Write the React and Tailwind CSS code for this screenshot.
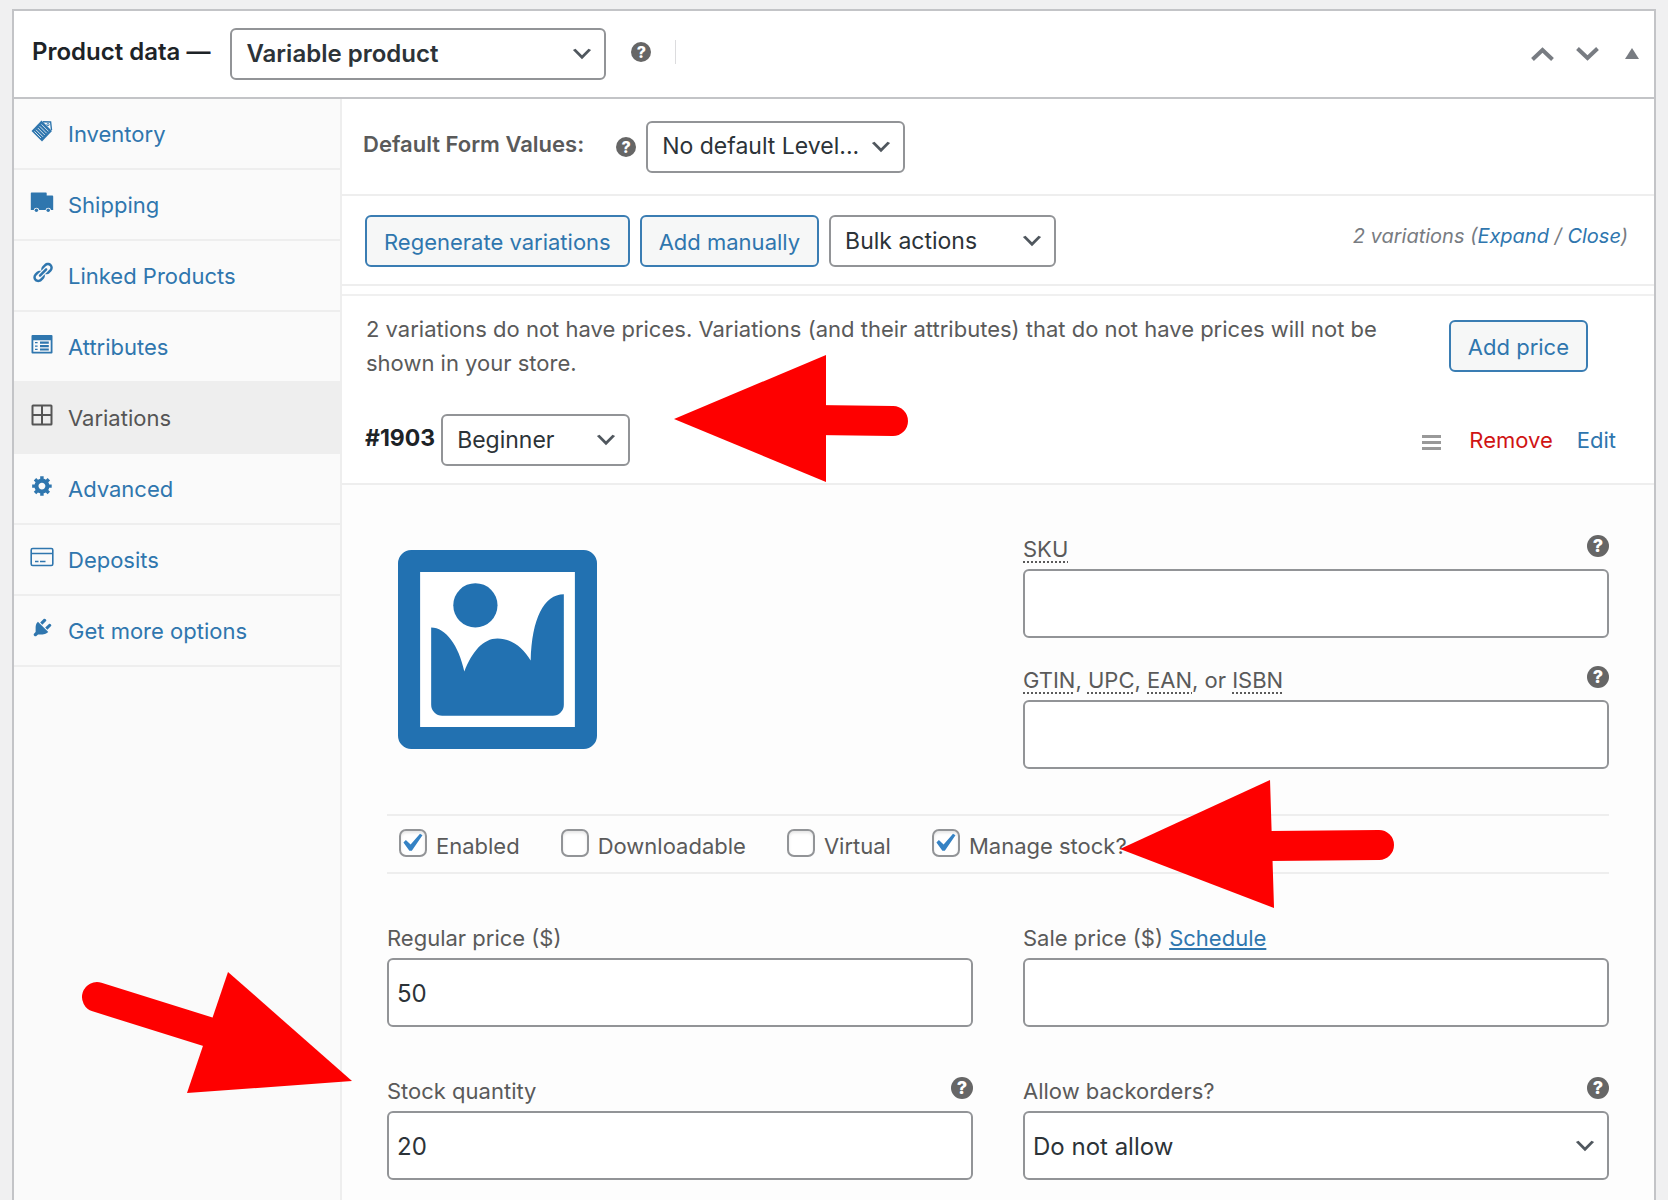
import React, { useState } from 'react';
import clsx from 'clsx';

const iconPaths = {
  link: 'M17.74 2.76c1.68 1.69 1.68 4.41 0 6.1l-1.53 1.52c-1.12 1.12-2.7 1.47-4.14 1.09l2.62-2.61.76-.77.76-.76c.84-.84.84-2.2 0-3.04-.84-.85-2.2-.85-3.04 0l-.77.76-3.38 3.38c-.37-1.44-.02-3.02 1.1-4.14l1.52-1.53c1.69-1.68 4.42-1.68 6.1 0zM8.59 13.43l5.34-5.34c.42-.42.42-1.1 0-1.52-.44-.43-1.13-.39-1.53 0l-5.33 5.34c-.42.42-.42 1.1 0 1.52.44.43 1.13.39 1.52 0zm-.76 2.29l4.14-4.15c.38 1.44.03 3.02-1.09 4.14l-1.52 1.53c-1.69 1.68-4.41 1.68-6.1 0-1.68-1.68-1.68-4.42 0-6.1l1.53-1.52c1.12-1.12 2.7-1.47 4.14-1.1l-4.14 4.15c-.85.84-.85 2.2 0 3.05.84.84 2.2.84 3.04 0z',
  gear: 'M18 12h-2.18c-.17.7-.44 1.35-.81 1.93l1.54 1.54-2.1 2.1-1.54-1.54c-.58.36-1.23.63-1.91.79V19H8v-2.18c-.68-.16-1.33-.43-1.91-.79l-1.54 1.54-2.12-2.12 1.54-1.54c-.36-.58-.63-1.23-.79-1.91H1V9.03h2.17c.16-.7.44-1.35.8-1.94L2.43 5.55l2.1-2.1 1.54 1.54c.58-.37 1.24-.64 1.93-.81V2h3v2.18c.68.16 1.33.43 1.91.79l1.54-1.54 2.12 2.12-1.54 1.54c.36.59.64 1.24.8 1.94H18V12zm-8.5 1.5c1.66 0 3-1.34 3-3s-1.34-3-3-3-3 1.34-3 3 1.34 3 3 3z',
  plug: 'M13.11 4.36L9.87 7.6 8 5.73l3.24-3.24c.35-.34 1.05-.2 1.56.32.52.51.66 1.21.31 1.55zm-8 1.77l.91-1.12 9.01 9.01-1.19.84c-.71.71-2.63 1.16-3.82 1.16H6.14L4.9 17.26c-.59.59-1.54.59-2.12 0-.59-.58-.59-1.53 0-2.12l1.24-1.24v-3.88c0-1.13.4-3.19 1.09-3.89zm7.26 3.97l3.24-3.24c.34-.35 1.04-.21 1.55.31.52.51.66 1.21.31 1.55l-3.24 3.25z',
};

const PathIcon = ({ d }) => (
  <svg viewBox="0 0 20 20" className="size-[23px] overflow-visible" fill="currentColor" aria-hidden="true">
    <path d={d} />
  </svg>
);

const NoteIcon = () => (
  <svg viewBox="0 0 24 24" className="size-6" fill="none" stroke="currentColor" aria-hidden="true">
    <path d="M11.5 1.5L22 12 12 22.5 1.5 12z" fill="currentColor" stroke="none" />
    <path d="M13 2.8l7.6.2.9 8" strokeWidth="1.4" />
    <circle cx="18" cy="5.6" r="1.1" strokeWidth="0.9" />
    <path d="M11.5 5.4l7 7M9.6 7.2l7 7M7.8 9l7 7M6 10.8l7 7M4.4 12.4l6.6 6.6" stroke="#fafafa" strokeWidth="0.8" />
  </svg>
);

const TruckIcon = () => (
  <svg viewBox="0 0 24 24" className="size-6" fill="currentColor" aria-hidden="true">
    <path d="M1.5 2.5h14.5a.7.7 0 0 1 .7.7V5.5h5.6a.9.9 0 0 1 .9.9V20h-2.2a2.8 2.8 0 0 0-5.5 0H9.2a2.8 2.8 0 0 0-5.5 0H.8V3.2a.7.7 0 0 1 .7-.7z" />
    <circle cx="6.4" cy="20.2" r="1.7" />
    <circle cx="18.2" cy="20.2" r="1.7" />
  </svg>
);

const ListIcon = () => (
  <svg viewBox="0 0 24 24" className="size-6" fill="currentColor" aria-hidden="true">
    <path fillRule="evenodd" d="M2.5 3h19a1 1 0 0 1 1 1v16.5a1 1 0 0 1-1 1h-19a1 1 0 0 1-1-1V4a1 1 0 0 1 1-1zM3.3 8.2v11.6h17.4V8.2z" />
    <path d="M10 9.6h8.8v2.2H10zM10 13h8.8v2.2H10zM10 16.4h8.8v2.2H10zM5 10h2.6v1.3H5zM5 13.4h2.6v1.3H5zM5 16.8h2.6v1.3H5z" />
  </svg>
);

const GridIcon = () => (
  <svg viewBox="0 0 24 24" className="size-6" fill="none" stroke="currentColor" strokeWidth="2" aria-hidden="true">
    <rect x="2.5" y="2.5" width="19" height="19" rx="0.5" />
    <path d="M12 2.5v19M2.5 12h19" />
  </svg>
);

const CardIcon = () => (
  <svg viewBox="0 0 24 24" className="size-6" fill="none" stroke="currentColor" strokeWidth="1.6" aria-hidden="true">
    <rect x="1.2" y="3.5" width="21.6" height="17" rx="1.5" />
    <path d="M1.2 8.5h21.6M5 16.5h3.5M10 16.5h5.5" />
  </svg>
);

const tabs = [
  { label: 'Inventory', icon: <NoteIcon /> },
  { label: 'Shipping', icon: <TruckIcon /> },
  { label: 'Linked Products', icon: <PathIcon d={iconPaths.link} /> },
  { label: 'Attributes', icon: <ListIcon /> },
  { label: 'Variations', icon: <GridIcon /> },
  { label: 'Advanced', icon: <PathIcon d={iconPaths.gear} /> },
  { label: 'Deposits', icon: <CardIcon /> },
  { label: 'Get more options', icon: <PathIcon d={iconPaths.plug} /> },
];

const HelpTip = ({ small }) => (
  <span
    className={clsx(
      'flex shrink-0 items-center justify-center rounded-full bg-[#666] font-extrabold text-white',
      small ? 'size-5 text-base' : 'size-[22px] text-lg'
    )}
  >
    ?
  </span>
);

const Select = ({ id, label, options, className, selectClass }) => (
  <div className={clsx('relative', className)}>
    <select
      id={id}
      aria-label={label}
      className={clsx('w-full appearance-none rounded-md border-2 border-[#929497] bg-white text-[#2c3338]', selectClass)}
    >
      {options.map(o => <option key={o}>{o}</option>)}
    </select>
    <svg viewBox="0 0 20 20" className="pointer-events-none absolute top-1/2 right-[11px] size-[26px] -translate-y-1/2" fill="#50575e" aria-hidden="true">
      <path d="M5 6l5 5 5-5 2 1-7 7-7-7 2-1z" />
    </svg>
  </div>
);

const Field = ({ id, label, help, children }) => (
  <div>
    <div className="mb-0.5 flex items-start justify-between">
      <label htmlFor={id} className="leading-9">{label}</label>
      {help && <div className="pt-1"><HelpTip /></div>}
    </div>
    {children}
  </div>
);

const TextInput = ({ id, defaultValue }) => (
  <input
    id={id}
    type="text"
    defaultValue={defaultValue}
    className="block h-[69px] w-full rounded-md border-2 border-[#929497] bg-white px-2 pt-0.5 text-2xl text-[#2c3338]"
  />
);

const Abbr = ({ children }) => (
  <abbr className="underline decoration-dotted decoration-2 underline-offset-4">{children}</abbr>
);

const Check = ({ label, checked, onChange }) => (
  <label className="flex items-center gap-[9px]">
    <span className="relative flex size-7">
      <input
        type="checkbox"
        checked={checked}
        onChange={onChange}
        className="size-7 appearance-none rounded-[7px] border-2 border-[#929497] bg-white shadow-[inset_0_2px_3px_rgba(0,0,0,0.1)]"
      />
      {checked && (
        <svg viewBox="5 4 12 11" className="pointer-events-none absolute inset-x-[3px] top-[3px] w-[22px]" fill="#3582c4" aria-hidden="true">
          <path d="M14.83 4.89l1.34.94-5.81 8.38H9.02L5.78 9.67l1.34-1.25 2.57 2.4z" />
        </svg>
      )}
    </span>
    <span className="pt-1.5">{label}</span>
  </label>
);

const Button = ({ children }) => (
  <button className="h-[52px] rounded-md border-2 border-[#3a7db3] bg-[#f6f7f7] px-[17px] pt-0.5 text-[#2f76ae]">{children}</button>
);

const link = 'text-[#2f76ae]';

const PlaceholderImage = () => (
  <svg viewBox="0 0 18 18" className="size-[199px]" fill="#2271b1" aria-hidden="true">
    <path d="M1.2 0h15.6A1.2 1.2 0 0 1 18 1.2v15.6a1.2 1.2 0 0 1-1.2 1.2H1.2A1.2 1.2 0 0 1 0 16.8V1.2A1.2 1.2 0 0 1 1.2 0z" />
    <path fill="#fff" d="M2 2h14v14H2z" />
    <circle cx="7" cy="5" r="2" />
    <path d="M3 7c1.3 0 2.5 1.6 3 4 .7-1.8 1.7-3 3-3s2.3.8 3 2c.1-3.8 1.2-6 3-6v10a1 1 0 0 1-1 1H4a1 1 0 0 1-1-1z" />
  </svg>
);

// Red pointers drawn over the panel
const Arrows = () => (
  <svg width="1668" height="1200" viewBox="0 0 1668 1200" className="pointer-events-none absolute top-0 left-0 max-w-none" fill="#fe0000" aria-hidden="true">
    <g stroke="#fe0000" strokeWidth="30" strokeLinecap="round">
      <path d="M815 420L893 421" />
      <path d="M1262 846L1379 845" />
      <path d="M97 997L215 1034" />
    </g>
    <path d="M674 419L826 355V482z" />
    <path d="M1120 849L1270 780L1274 908z" />
    <path d="M352 1081L228 972L187 1093z" />
  </svg>
);

export default function App() {
  const [active, setActive] = useState('Variations');
  const [options, setOptions] = useState({
    'Enabled': true,
    'Downloadable': false,
    'Virtual': false,
    'Manage stock?': true,
  });

  const toggle = (name) => setOptions({ ...options, [name]: !options[name] });

  return (
    <div className="relative flex min-h-screen flex-col overflow-hidden bg-[#f0f0f1] px-3 pt-[9px] font-['Inter',sans-serif] text-[22px] text-[#5a5a5a]">
      <div className="flex flex-1 flex-col border-2 border-b-0 border-[#c3c4c7] bg-white">
        <header className="flex h-[88px] items-center border-b-2 border-[#c3c4c7] pr-[15px] pl-[18px]">
          <h2 className="pb-1 text-2xl font-semibold text-[#1d2327]">Product data —</h2>
          <Select
            label="Product type"
            options={['Variable product', 'Simple product']}
            className="ml-5 w-[376px]"
            selectClass="h-[52px] px-3.5 text-2xl font-semibold"
          />
          <div className="ml-[25px] flex items-center gap-6 pb-1">
            <HelpTip small />
            <span className="h-6 w-px bg-[#dcdcde]"></span>
          </div>
          <div className="ml-auto flex items-center gap-[22px] text-[#787c82]">
            <button aria-label="Move up">
              <svg viewBox="0 0 23 14" className="w-[23px]" fill="none" stroke="currentColor" strokeWidth="4"><path d="M1.5 12.5l10-9.5 10 9.5" /></svg>
            </button>
            <button aria-label="Move down">
              <svg viewBox="0 0 23 14" className="w-[23px]" fill="none" stroke="currentColor" strokeWidth="4"><path d="M1.5 1.5l10 9.5 10-9.5" /></svg>
            </button>
            <button aria-label="Toggle panel" className="pb-0.5 pl-1">
              <svg viewBox="0 0 14 11" className="w-3.5" fill="currentColor"><path d="M7 0l7 11H0z" /></svg>
            </button>
          </div>
        </header>

        <div className="flex flex-1">
          <nav className="w-[328px] shrink-0 border-r-2 border-[#eee] bg-[#fafafa]">
            <ul>
              {tabs.map(tab => (
                <li key={tab.label}>
                  <a
                    href="#"
                    onClick={() => setActive(tab.label)}
                    className={clsx(
                      'flex h-[71px] items-center gap-3.5 border-b-2 border-[#eee] pt-0.5 pl-4',
                      active === tab.label ? 'bg-[#eee] text-[#555]' : link
                    )}
                  >
                    <span className="flex w-6 justify-center pb-2">{tab.icon}</span>
                    {tab.label}
                  </a>
                </li>
              ))}
            </ul>
          </nav>

          <main className="flex min-w-0 flex-1 flex-col">
            <div className="flex h-[97px] items-center border-b-2 border-[#eee] pl-[21px]">
              <strong className="pb-1 font-semibold">Default Form Values:</strong>
              <div className="ml-8"><HelpTip small /></div>
              <Select label="Default level" options={['No default Level...']} className="ml-2.5 w-[259px]" selectClass="h-[52px] px-3.5 text-[23px]" />
            </div>

            <div className="flex h-[90px] items-center gap-2.5 border-b-2 border-[#eee] pt-0.5 pr-[26px] pl-[23px]">
              <Button>Regenerate variations</Button>
              <Button>Add manually</Button>
              <Select label="Bulk actions" options={['Bulk actions']} className="w-[227px]" selectClass="h-[52px] px-3.5 text-[23px]" />
              <span className="ml-auto pb-2.5 text-xl text-[#787c82] italic">
                2 variations (<a href="#" className={link}>Expand</a> / <a href="#" className={link}>Close</a>)
              </span>
            </div>

            <div className="mt-2 flex items-center justify-between border-t-2 border-[#f0f0f0] pt-4 pr-[66px] pl-6">
              <p className="max-w-[1050px] leading-[34px]">
                2 variations do not have prices. Variations (and their attributes) that do not have prices will not be shown in your store.
              </p>
              <Button>Add price</Button>
            </div>

            <div className="flex items-center border-b-2 border-[#eee] pt-[34px] pr-[38px] pb-[17px] pl-[23px]">
              <strong className="pb-1 text-[23px] font-bold text-[#1d2327]">#1903</strong>
              <Select label="Level" options={['Beginner', 'Advanced']} className="ml-1.5 w-[189px]" selectClass="h-[52px] px-3.5 text-[23px]" />
              <div className="ml-auto flex items-center gap-6">
                <svg viewBox="0 0 19 15" className="mt-1 mr-1 w-[19px]" fill="#999" aria-hidden="true">
                  <path d="M0 0h19v3H0zM0 6h19v3H0zM0 12h19v3H0z" />
                </svg>
                <a href="#" className="text-[#d01414]">Remove</a>
                <a href="#" className={link}>Edit</a>
              </div>
            </div>

            <div className="flex-1 bg-[#fdfdfd] px-[45px] pt-[46px]">
              <div className="grid grid-cols-2 gap-[50px]">
                <a href="#" aria-label="Upload an image" className="self-start pt-[19px] pl-[11px]">
                  <PlaceholderImage />
                </a>
                <div className="flex flex-col gap-6">
                  <Field id="sku" label={<Abbr>SKU</Abbr>} help>
                    <TextInput id="sku" />
                  </Field>
                  <Field id="gtin" label={<><Abbr>GTIN</Abbr>, <Abbr>UPC</Abbr>, <Abbr>EAN</Abbr>, or <Abbr>ISBN</Abbr></>} help>
                    <TextInput id="gtin" />
                  </Field>
                </div>
              </div>

              <div className="mt-[45px] flex h-[60px] items-center gap-[41px] border-y-2 border-[#eee] px-3 pb-0.5">
                {Object.keys(options).map(name => (
                  <Check key={name} label={name} checked={options[name]} onChange={() => toggle(name)} />
                ))}
              </div>

              <div className="mt-[46px] grid grid-cols-2 gap-x-[50px] gap-y-[46px]">
                <Field id="regular" label="Regular price ($)">
                  <TextInput id="regular" defaultValue="50" />
                </Field>
                <Field id="sale" label={<>Sale price ($) <a href="#" className="text-[#2f76ae] underline">Schedule</a></>}>
                  <TextInput id="sale" />
                </Field>
                <Field id="stock" label="Stock quantity" help>
                  <TextInput id="stock" defaultValue="20" />
                </Field>
                <Field id="backorders" label="Allow backorders?" help>
                  <Select id="backorders" options={['Do not allow', 'Allow']} selectClass="h-[69px] px-2 pt-0.5 text-2xl" />
                </Field>
              </div>
            </div>
          </main>
        </div>
      </div>
      <Arrows />
    </div>
  );
}
